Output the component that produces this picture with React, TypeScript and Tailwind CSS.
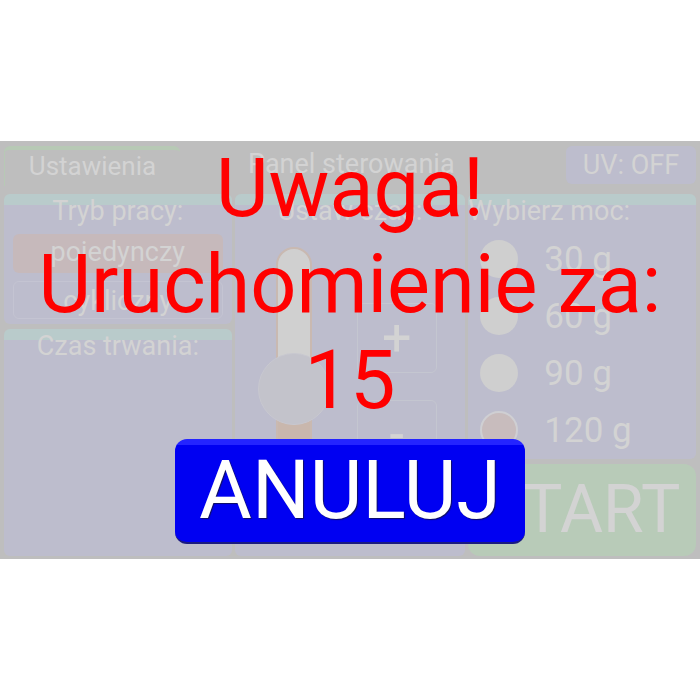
const faint = 'text-[#d3d3d3]'

function Panel({ title, className, children }: { title: string; className?: string; children?: React.ReactNode }) {
  return (
    <div
      className={`rounded-md bg-[linear-gradient(to_bottom,#b9cbcb_11px,#bdbdcd_11px)] flex flex-col items-center ${className ?? ''}`}
    >
      <div className={`text-[27px] leading-[32px] mt-[1px] ${faint}`}>{title}</div>
      {children}
    </div>
  )
}

export default function App() {
  const powers = ['30 g', '60 g', '90 g', '120 g']

  return (
    <div className="w-[700px] h-[700px] bg-white flex items-center" style={{ fontFamily: 'Roboto, "Noto Sans", sans-serif' }}>
      <div className="relative w-full h-[418px] bg-[#bebebe] flex flex-col">
        {/* top bar */}
        <div className="h-[53px] flex items-start pt-[5px] px-[4px]">
          <div className={`w-[176px] h-[40px] rounded-t-md border-t-[4px] border-l border-[#b7c9b5] text-center text-[26px] leading-[32px] ${faint}`}>
            Ustawienia
          </div>
          <div className={`ml-[68px] text-[27px] leading-[36px] ${faint}`}>Panel sterowania</div>
          <div className={`ml-auto w-[130px] h-[38px] rounded-md bg-[#bdbdcd] text-center text-[27px] leading-[38px] ${faint}`}>
            UV: OFF
          </div>
        </div>

        {/* columns */}
        <div className="flex gap-[3px] px-[4px] h-[362px]">
          <div className="w-[228px] flex flex-col gap-[5px]">
            <Panel title="Tryb pracy:" className="h-[130px]">
              <div className={`mt-[7px] w-[210px] h-[39px] rounded-md bg-[#c6b9bb] text-center text-[27px] leading-[36px] ${faint}`}>
                pojedynczy
              </div>
              <div className={`mt-[8px] w-[210px] h-[38px] rounded-md border border-[#c4c4d2] text-center text-[27px] leading-[38px] ${faint}`}>
                cykliczny
              </div>
            </Panel>
            <Panel title="Czas trwania:" className="flex-1" />
          </div>

          <Panel title="Ustaw czas:" className="w-[231px] h-full relative">
            <div className="w-full flex mt-[20px]">
              <div className="relative ml-[41px] w-[36px] h-[290px] rounded-t-full border-2 border-[#c9b9b1] bg-[#d0d0d0]">
                <div className="absolute left-0 right-0 top-[142px] bottom-0 bg-[#c9b7ad]" />
                <div className="absolute left-[-20px] top-[104px] w-[72px] h-[72px] rounded-full bg-[#c3c3cb] border border-[#c8c8d0]" />
              </div>
              <div className="ml-[45px] mt-[56px] flex flex-col gap-[27px]">
                <div className={`w-[80px] h-[70px] rounded-md border border-[#c4c6d0] flex items-center justify-center text-[52px] leading-none ${faint}`}>+</div>
                <div className={`w-[80px] h-[70px] rounded-md border border-[#c4c6d0] flex items-center justify-center text-[52px] leading-none ${faint}`}>-</div>
              </div>
            </div>
          </Panel>

          <div className="w-[228px] flex flex-col gap-[5px]">
            <Panel title="Wybierz moc:" className="h-[265px] !items-start">
              <div className="flex flex-col gap-[19px] mt-[13px] pl-[12px]">
                {powers.map((p, i) => (
                  <div key={p} className="flex items-center h-[38px]">
                    <div
                      className={
                        i === 3
                          ? 'w-[38px] h-[38px] rounded-full bg-[#c8bcbd] border-2 border-[#cfcfd3]'
                          : 'w-[38px] h-[38px] rounded-full bg-[#cfcfcf]'
                      }
                    />
                    <span className={`ml-[26px] text-[35px] leading-none ${faint}`}>{p}</span>
                  </div>
                ))}
              </div>
            </Panel>
            <div className={`flex-1 rounded-xl bg-[#b8cbb8] flex items-center justify-center text-[66px] leading-none ${faint}`}>
              START
            </div>
          </div>
        </div>

        {/* countdown overlay */}
        <div className="absolute inset-0 flex flex-col items-center">
          <div className="text-center text-[#ff0000] text-[81px] leading-[96px]">
            <div>Uwaga!</div>
            <div>Uruchomienie za:</div>
            <div>15</div>
          </div>
          <button className="mt-[10px] w-[350px] h-[105px] rounded-xl bg-[linear-gradient(to_bottom,#2424ff_6px,#0000f2_6px)] border-b-2 border-[#1a1a80] text-white text-[81px] leading-none [text-shadow:1px_1px_1px_#101060]">
            ANULUJ
          </button>
        </div>
      </div>
    </div>
  )
}
